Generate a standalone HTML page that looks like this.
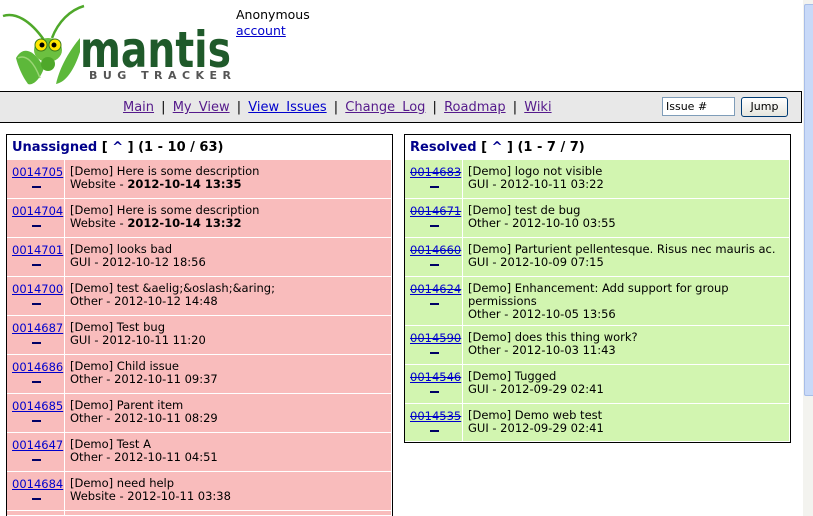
<!DOCTYPE html>
<html><head><meta charset="utf-8"><style>
*{margin:0;padding:0;box-sizing:border-box}
html,body{width:813px;height:516px;overflow:hidden}
body{background:#fff;font-family:"DejaVu Sans",Verdana,sans-serif;font-size:11.5px;color:#000;position:relative}
a{color:#0000cc}
.abs{position:absolute}
.nav{left:0;top:91px;width:802px;height:32px;background:#e8e8e8;border:1px solid #000;border-left:none}
.navlinks{position:absolute;left:123px;top:8px;font-size:13px;white-space:nowrap;color:#000;word-spacing:3px}
.navlinks a{color:#551a8b}
.tbl{position:absolute;border:1px solid #000;background:#fff}
.hdr{position:absolute;left:5px;top:5px;font-weight:bold;font-size:13px;white-space:nowrap}
.hdr .t{color:#00008b}
.hdr a{color:#00008b;text-decoration:none}
.row{position:absolute;left:1px;overflow:hidden}
.c1,.c2{position:absolute;top:0;bottom:1px}
.c1{left:0;width:57px}
.c2{left:58px}
.id{position:absolute;left:5px;top:5px;font-size:11.5px}
.dash{position:absolute;left:25px;top:26px;width:9px;height:2px;background:#000066}
.txt{position:absolute;left:5px;top:5px;line-height:13px;white-space:nowrap}
.pk{background:#f9bcbc}
.gr{background:#d2f5b0}
.gr .id a{text-decoration:underline line-through}
</style></head><body>

<svg class="abs" style="left:0;top:0" width="235" height="88" viewBox="0 0 235 88">
 <path d="M44 40 C30 20 15 12 3 16" stroke="#4fa82a" stroke-width="2.5" fill="none"/>
 <path d="M52 38 C58 22 70 10 84 6" stroke="#4fa82a" stroke-width="2.5" fill="none"/>
 <path d="M16 58 C24 44 36 52 44 68 C40 80 32 86 28 84 C22 76 18 66 16 58Z" fill="#5db83a"/>
 <path d="M80 38 C70 50 60 66 56 84 C66 82 74 70 80 52Z" fill="#5db83a"/>
 <path d="M18 58 C26 54 34 62 40 78" stroke="#9cd676" stroke-width="1.5" fill="none"/>
 <ellipse cx="48" cy="50" rx="14" ry="12" fill="#6cc040"/>
 <ellipse cx="48" cy="64" rx="7" ry="7" fill="#4fa82a"/>
 <circle cx="41" cy="45" r="6" fill="#ffe600" stroke="#3a7a1a" stroke-width="1"/>
 <circle cx="55" cy="45" r="6" fill="#ffe600" stroke="#3a7a1a" stroke-width="1"/>
 <circle cx="42" cy="45" r="2.5" fill="#000"/>
 <circle cx="54" cy="45" r="2.5" fill="#000"/>
 <text x="80" y="67" font-family="DejaVu Sans, sans-serif" font-weight="bold" font-size="50" fill="#1f5a2a" textLength="151" lengthAdjust="spacingAndGlyphs">mantis</text>
 <text x="89" y="79" font-family="DejaVu Sans, sans-serif" font-weight="bold" font-size="11" fill="#555" textLength="142" lengthAdjust="spacing">BUG TRACKER</text>
</svg>

<div class="abs" style="left:236px;top:7px;font-size:12.5px;line-height:16px">Anonymous<br><a href="#">account</a></div>

<div class="abs nav">
 <div class="navlinks"><a href="#">Main</a> | <a href="#">My View</a> | <a href="#" style="color:#0000cc">View Issues</a> | <a href="#">Change Log</a> | <a href="#">Roadmap</a> | <a href="#">Wiki</a></div>
 <div style="position:absolute;left:662px;top:5px;width:73px;height:19px;border:1px solid #7f9db9;background:#fff;font-size:11px;padding:2px 3px">Issue #</div>
 <div style="position:absolute;left:741px;top:5px;width:47px;height:20px;border:1px solid #003c74;border-radius:3px;background:linear-gradient(#fff,#e6e6de);font-size:11px;text-align:center;line-height:18px">Jump</div>
</div>

<div class="tbl" style="left:6px;top:134px;width:387px;height:400px">
 <div class="hdr"><span class="t">Unassigned</span> [ <a href="#">^</a> ] (1 - 10 / 63)</div>
</div>
<div class="tbl" style="left:404px;top:134px;width:387px;height:309px">
 <div class="hdr"><span class="t">Resolved</span> [ <a href="#">^</a> ] (1 - 7 / 7)</div>
</div>

<div id="L"></div><div id="R"></div>

<div class="abs" style="left:803px;top:0;width:10px;height:516px;background:#f3f3ef"></div>
<div class="abs" style="left:804px;top:4px;width:9px;height:392px;background:#c8d9f8;border:1px solid #a7bde8;border-right:none;border-radius:2px 0 0 2px"></div>

<script>
function build(id,x,y,cls,w,rows){
 var h='',top=y;
 rows.forEach(function(r){
  var ht=r.h||39;
  h+='<div class="row" style="left:'+x+'px;top:'+top+'px;width:'+w+'px;height:'+ht+'px"><div class="c1 '+cls+'"><div class="id"><a href="#">'+r.id+'</a></div><div class="dash"></div></div><div class="c2 '+cls+'" style="width:'+(w-58)+'px"><div class="txt">'+r.t+'</div></div></div>';
  top+=ht;
 });
 document.getElementById(id).innerHTML=h;
}
build('L',7,160,'pk',384,[
 {id:'0014705',t:'[Demo] Here is some description<br>Website - <b>2012-10-14 13:35</b>'},
 {id:'0014704',t:'[Demo] Here is some description<br>Website - <b>2012-10-14 13:32</b>'},
 {id:'0014701',t:'[Demo] looks bad<br>GUI - 2012-10-12 18:56'},
 {id:'0014700',t:'[Demo] test &amp;aelig;&amp;oslash;&amp;aring;<br>Other - 2012-10-12 14:48'},
 {id:'0014687',t:'[Demo] Test bug<br>GUI - 2012-10-11 11:20'},
 {id:'0014686',t:'[Demo] Child issue<br>Other - 2012-10-11 09:37'},
 {id:'0014685',t:'[Demo] Parent item<br>Other - 2012-10-11 08:29'},
 {id:'0014647',t:'[Demo] Test A<br>Other - 2012-10-11 04:51'},
 {id:'0014684',t:'[Demo] need help<br>Website - 2012-10-11 03:38'},
 {id:'',h:5,t:''}
]);
build('R',405,160,'gr',384,[
 {id:'0014683',t:'[Demo] logo not visible<br>GUI - 2012-10-11 03:22'},
 {id:'0014671',t:'[Demo] test de bug<br>Other - 2012-10-10 03:55'},
 {id:'0014660',t:'[Demo] Parturient pellentesque. Risus nec mauris ac.<br>GUI - 2012-10-09 07:15'},
 {id:'0014624',h:49,t:'[Demo] Enhancement: Add support for group<br>permissions<br>Other - 2012-10-05 13:56'},
 {id:'0014590',t:'[Demo] does this thing work?<br>Other - 2012-10-03 11:43'},
 {id:'0014546',t:'[Demo] Tugged<br>GUI - 2012-09-29 02:41'},
 {id:'0014535',h:38,t:'[Demo] Demo web test<br>GUI - 2012-09-29 02:41'}
]);
</script>
</body></html>
